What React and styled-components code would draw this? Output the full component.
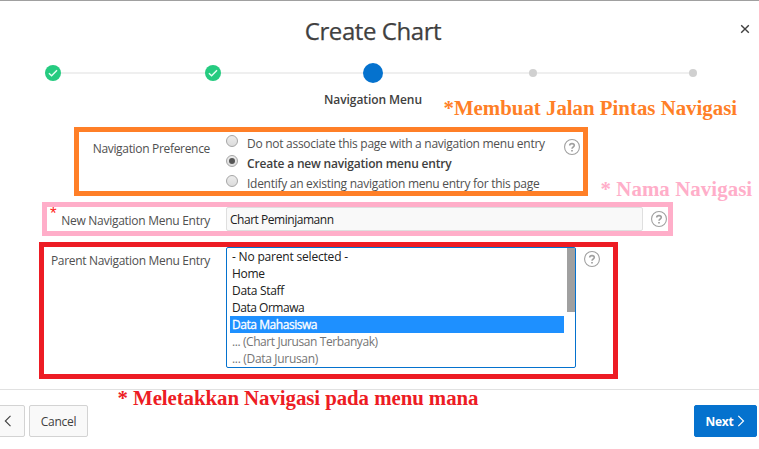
import React from "react";
import styled, { createGlobalStyle } from "styled-components";

const GlobalStyle = createGlobalStyle`
  *, *::before, *::after { box-sizing: border-box; }
  body {
    margin: 0;
    background: #fff;
    overflow: hidden;
    font-family: "Open Sans", "Noto Sans", sans-serif;
    font-size: 12px;
    color: #404040;
  }
`;

const Dialog = styled.main`
  position: relative;
  display: flex;
  flex-direction: column;
  width: 759px;
  height: 449px;
  border-top: 1px solid #a0a0a0;
  white-space: nowrap;
`;

const Header = styled.header`
  height: 62px;
`;

const Title = styled.h1`
  width: 746px;
  margin: 0;
  padding-top: 12px;
  font-size: 24px;
  line-height: 36px;
  font-weight: 400;
  letter-spacing: -0.42px;
  text-align: center;
  color: #404040;
  -webkit-text-stroke: 0.25px #404040;
`;

const CloseButton = styled.button`
  position: absolute;
  top: 23px;
  right: 9px;
  width: 10px;
  height: 10px;
  padding: 0;
  border: 0;
  background: none;
  svg { display: block; }
`;

const Stepper = styled.div`
  display: flex;
  align-items: center;
  width: 652px;
  height: 20px;
  margin-left: 45px;
`;

const Dot = styled.span`
  flex: none;
  display: flex;
  width: ${(p) => p.$size}px;
  height: ${(p) => p.$size}px;
  border-radius: 50%;
  background: ${(p) => p.$color};
`;

const Connector = styled.span`
  flex: none;
  width: ${(p) => p.$width}px;
  height: 2px;
  background: #efefef;
`;

const StepLabel = styled.div`
  width: 746px;
  height: 44px;
  padding-top: 8px;
  text-align: center;
  font-weight: 600;
  line-height: 18px;
  letter-spacing: -0.08px;
`;

const FieldRow = styled.section`
  flex: none;
  display: flex;
  align-items: flex-start;
  width: ${(p) => p.$width}px;
  height: ${(p) => p.$height}px;
  margin: 0 0 6px ${(p) => p.$left}px;
  border: 5px solid ${(p) => p.$color};
`;

const Label = styled.label`
  flex: none;
  width: ${(p) => p.$width}px;
  padding-top: ${(p) => p.$top}px;
  margin-right: 16px;
  line-height: 18px;
  text-align: right;
  color: #505050;
  letter-spacing: ${(p) => p.$track}px;
`;

const Required = styled.span`
  float: left;
  margin-left: 3px;
  margin-top: -8px;
  font: 400 17px/20px "Liberation Sans", sans-serif;
  color: #f22;
`;

const RadioGroup = styled.div`
  flex: none;
  width: 338px;
  height: 59px;
  padding-top: 1px;
`;

const RadioOption = styled.div`
  display: flex;
  gap: 9px;
  height: 20px;
  line-height: 20px;
  color: ${(p) => (p.$checked ? "#404040" : "#505050")};
  font-weight: ${(p) => (p.$checked ? 600 : 400)};
  letter-spacing: ${(p) => (p.$checked ? -0.18 : -0.275)}px;
`;

const RadioMark = styled.span`
  display: flex;
  align-items: center;
  justify-content: center;
  width: 12px;
  height: 12px;
  margin-top: 2px;
  border: 1px solid #a6a6a6;
  border-radius: 50%;
  background: linear-gradient(#ececec, #dcdcdc);
  &::after {
    content: "";
    width: 6px;
    height: 6px;
    border-radius: 50%;
    background: ${(p) => (p.$checked ? "#555" : "transparent")};
  }
`;

const OptionText = styled.span`
  padding-top: 1px;
`;

const HelpButton = styled.button`
  flex: none;
  width: 16px;
  height: 16px;
  padding: 0;
  margin: ${(p) => p.$top}px 0 0 ${(p) => p.$left}px;
  border: 0;
  background: none;
  svg { display: block; }
`;

const TextField = styled.div`
  flex: none;
  width: 417px;
  height: 24px;
  padding-left: 3px;
  border: 1px solid #dfdfdf;
  border-radius: 2px;
  background: #f9f9f9;
  color: #202020;
  line-height: 24px;
  letter-spacing: -0.47px;
`;

const ListBox = styled.div`
  flex: none;
  display: flex;
  justify-content: space-between;
  width: 350px;
  height: 121px;
  padding-left: 3px;
  border: 1px solid #0572ce;
  border-radius: 2px;
`;

const Options = styled.div`
  width: 334px;
`;

const Option = styled.div`
  height: 17px;
  padding-left: 2px;
  line-height: 18px;
  letter-spacing: ${(p) => p.$track}px;
  background: ${(p) => (p.$selected ? "#1e90ff" : "transparent")};
  color: ${(p) => (p.$selected ? "#fff" : p.$nested ? "#757575" : "#202020")};
  -webkit-text-stroke: ${(p) => (p.$selected ? "0.3px #fff" : "0")};
`;

const ScrollThumb = styled.div`
  width: 8px;
  height: 64px;
  background: #a0a0a0;
`;

const Footer = styled.footer`
  display: flex;
  align-items: flex-start;
  width: 759px;
  height: 60px;
  margin-top: 4px;
  padding: 15px 2px 0 0;
  border-top: 1px solid #e1e1e1;
`;

const Button = styled.button`
  flex: none;
  display: flex;
  align-items: center;
  justify-content: center;
  gap: 4px;
  width: ${(p) => p.$width}px;
  height: 32px;
  padding: 0;
  border: 1px solid ${(p) => (p.$primary ? "#0572ce" : "#d3d3d3")};
  border-radius: 2px;
  background: ${(p) => (p.$primary ? "#0572ce" : "#f9f9f9")};
  color: ${(p) => (p.$primary ? "#fff" : "#404040")};
  font: ${(p) => (p.$primary ? 700 : 400)} 12px/18px "Open Sans", sans-serif;
  letter-spacing: -0.3px;
`;

const ButtonText = styled.span`
  padding-top: 2px;
`;

const BackButton = styled(Button)`
  margin-left: -8px;
  margin-right: 4px;
  padding-right: 2px;
`;

const NextButton = styled(Button)`
  margin-left: auto;
`;

const Note = styled.p`
  position: absolute;
  left: ${(p) => p.$x}px;
  top: ${(p) => p.$y}px;
  margin: 0;
  font: 700 20.85px/24px "Liberation Serif", serif;
  letter-spacing: ${(p) => p.$track || 0}px;
  color: ${(p) => p.$color};
`;

const ORANGE = "#ff7f27";
const PINK = "#ffaec9";
const RED = "#ed1c24";

const options = [
  { text: "- No parent selected -", track: -0.19 },
  { text: "Home", track: -0.3 },
  { text: "Data Staff", track: -0.3 },
  { text: "Data Ormawa", track: -0.48 },
  { text: "Data Mahasiswa", track: -0.45 },
  { text: "... (Chart Jurusan Terbanyak)", track: -0.42, nested: true },
  { text: "... (Data Jurusan)", track: -0.32, nested: true },
];
const selectedOption = "Data Mahasiswa";

const radios = [
  { text: "Do not associate this page with a navigation menu entry" },
  { text: "Create a new navigation menu entry", checked: true },
  { text: "Identify an existing navigation menu entry for this page" },
];

function Done() {
  return (
    <Dot $size={16} $color="#25cb80">
      <svg width="16" height="16" viewBox="0 0 16 16" fill="none">
        <path d="M3.9 8.2L6.6 10.7L12 5.3" stroke="#e4fff2" strokeWidth="1.5" />
      </svg>
    </Dot>
  );
}

function Help({ left, top }) {
  return (
    <HelpButton $left={left} $top={top} aria-label="Help">
      <svg width="16" height="16" viewBox="0 0 16 16" fill="none" stroke="#a0a0a0">
        <circle cx="8" cy="8" r="7.45" strokeWidth="1.1" />
        <path d="M5.7 6.6C5.7 3.9 10.3 3.9 10.3 6.6C10.3 8.1 8 8 8 9.8" strokeWidth="1.6" />
        <path d="M8 10.9V12.5" strokeWidth="1.7" />
      </svg>
    </HelpButton>
  );
}

export default function App() {
  return (
    <>
      <GlobalStyle />
      <Dialog>
        <Header>
          <Title>Create Chart</Title>
          <CloseButton aria-label="Close">
            <svg width="10" height="10" viewBox="0 0 10 10" stroke="#404040" strokeWidth="1.4">
              <path d="M1.2 1.2L8.8 8.8M8.8 1.2L1.2 8.8" />
            </svg>
          </CloseButton>
        </Header>
        <Stepper>
          <Done />
          <Connector $width={144} />
          <Done />
          <Connector $width={142} />
          <Dot $size={20} $color="#0572ce" />
          <Connector $width={146} />
          <Dot $size={8} $color="#d0d0d0" />
          <Connector $width={152} />
          <Dot $size={8} $color="#d0d0d0" />
        </Stepper>
        <StepLabel>Navigation Menu</StepLabel>

        <FieldRow $left={74} $width={514} $height={69} $color={ORANGE}>
          <Label $width={131} $top={8} $track={-0.32}>Navigation Preference</Label>
          <RadioGroup>
            {radios.map((r) => (
              <RadioOption key={r.text} $checked={r.checked}>
                <RadioMark $checked={r.checked} />
                <OptionText>{r.text}</OptionText>
              </RadioOption>
            ))}
          </RadioGroup>
          <Help left={0} top={7} />
        </FieldRow>

        <FieldRow $left={42} $width={631} $height={34} $color={PINK}>
          <Label $width={163} $top={5} $track={-0.28}>
            <Required>*</Required>
            New Navigation Menu Entry
          </Label>
          <TextField>Chart Peminjamann</TextField>
          <Help left={8} top={4} />
        </FieldRow>

        <FieldRow $left={39} $width={579} $height={137} $color={RED}>
          <Label $width={166} $top={5} $track={-0.31}>Parent Navigation Menu Entry</Label>
          <ListBox>
            <Options>
              {options.map((o) => (
                <Option
                  key={o.text}
                  $selected={o.text === selectedOption}
                  $nested={o.nested}
                  $track={o.track}
                >
                  {o.text}
                </Option>
              ))}
            </Options>
            <ScrollThumb />
          </ListBox>
          <Help left={8} top={4} />
        </FieldRow>

        <Footer>
          <BackButton $width={33} aria-label="Back">
            <svg width="8" height="12" viewBox="0 0 8 12" fill="none" stroke="#404040" strokeWidth="1.1">
              <path d="M6.5 0.8L1.3 6L6.5 11.2" />
            </svg>
          </BackButton>
          <Button $width={59}>
            <ButtonText>Cancel</ButtonText>
          </Button>
          <NextButton $width={63} $primary>
            <ButtonText>Next</ButtonText>
            <svg width="8" height="12" viewBox="0 0 8 12" fill="none" stroke="#fff" strokeWidth="1.2">
              <path d="M1.3 0.8L6.5 6L1.3 11.2" />
            </svg>
          </NextButton>
        </Footer>

        <Note $x={443.5} $y={95} $color={ORANGE}>*Membuat Jalan Pintas Navigasi</Note>
        <Note $x={600.5} $y={176} $track={0.08} $color={PINK}>* Nama Navigasi</Note>
        <Note $x={117.5} $y={385} $track={-0.06} $color={RED}>* Meletakkan Navigasi pada menu mana</Note>
      </Dialog>
    </>
  );
}
